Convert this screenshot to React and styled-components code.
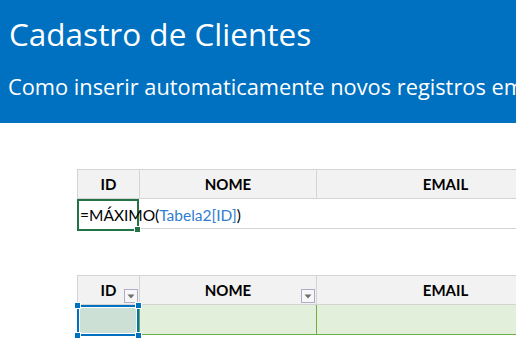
import React from "react";
import styled, { createGlobalStyle } from "styled-components";

const Global = createGlobalStyle`
  html, body { margin: 0; padding: 0; background: #fff; overflow: hidden; }
  body { width: 516px; height: 362px; font-family: Lato, "Open Sans", sans-serif; }
`;

const Page = styled.div`
  width: 516px;
  height: 362px;
  overflow: hidden;
  background: #fff;
`;

const Banner = styled.header`
  background: #0070c0;
  height: 123px;
  box-sizing: border-box;
  padding: 14px 0 0 9px;
  color: #fff;
  white-space: nowrap;
  overflow: hidden;
`;

const Title = styled.h1`
  margin: 0;
  font-family: "Open Sans", sans-serif;
  font-weight: 400;
  font-size: 31.5px;
  line-height: 40px;
  letter-spacing: 0;
`;

const Subtitle = styled.p`
  margin: 19px 0 0 -1px;
  font-family: "Open Sans", sans-serif;
  font-size: 21.8px;
  line-height: 28px;
`;

const Sheet = styled.section`
  padding-left: 77px;
  padding-top: ${(p) => p.$top}px;
`;

const Grid = styled.div`
  display: grid;
  grid-template-columns: 62px 177px 258px;
  grid-auto-rows: 30px;
  width: 497px;
`;

const HeadCell = styled.div`
  position: relative;
  background: #f2f2f2;
  border-top: 1px solid #d4d4d4;
  border-bottom: 1px solid #d4d4d4;
  border-left: 1px solid #d4d4d4;
  box-sizing: border-box;
  display: flex;
  align-items: center;
  justify-content: center;
  font-family: Lato, sans-serif;
  font-weight: 700;
  font-size: 15px;
  color: #000;
`;

const PlainCell = styled.div`
  position: relative;
  box-sizing: border-box;
  border-bottom: 1px solid #d4d4d4;
  background: #fff;
`;

const FormulaCell = styled.div`
  position: relative;
  box-sizing: border-box;
  border: 2px solid #217346;
  margin-bottom: -2px;
  z-index: 2;
  display: flex;
  align-items: center;
  padding-left: 1px;
  font-family: Lato, sans-serif;
  font-size: 15.5px;
  color: #000;
  white-space: nowrap;
  overflow: visible;
`;

const FillHandle = styled.span`
  position: absolute;
  right: -4px;
  bottom: -4px;
  width: 5px;
  height: 5px;
  background: #217346;
  border: 1px solid #fff;
`;

const Ref = styled.span`
  color: #2f7ed0;
`;

const Caret = styled.span`
  display: inline-block;
  width: 1px;
  height: 20px;
  background: #000;
  margin-left: 1px;
`;

const DataCell = styled.div`
  position: relative;
  box-sizing: border-box;
  background: #e2efda;
  border-bottom: 1px solid #70ad47;
  border-left: ${(p) => (p.$sep ? "1px solid #70ad47" : "none")};
`;

const SelectedCell = styled.div`
  position: relative;
  box-sizing: border-box;
  background: #cce0d6;
  border: 2px solid #0070c0;
  outline: 1px solid #fff;
  outline-offset: -3px;
  margin-bottom: -1px;
  z-index: 2;
`;

const Handle = styled.span`
  position: absolute;
  width: 5px;
  height: 5px;
  background: #0070c0;
  border: 1px solid #fff;
  ${(p) => (p.$top ? "top: -5px;" : "bottom: -5px;")}
  ${(p) => (p.$left ? "left: -5px;" : "right: -5px;")}
`;

const DropBtn = styled.span`
  position: absolute;
  right: 1px;
  bottom: 1px;
  width: 14px;
  height: 14px;
  box-sizing: border-box;
  border: 1px solid #b3a9c9;
  background: #f7f7f7;
  display: flex;
  align-items: center;
  justify-content: center;
`;

const Drop = () => (
  <DropBtn>
    <svg width="8" height="5" viewBox="0 0 8 5">
      <path d="M0.5 0.5 H7.5 L4 4.5 Z" fill="#6e6e6e" />
    </svg>
  </DropBtn>
);

export default function App() {
  return (
    <Page>
      <Global />
      <Banner>
        <Title>Cadastro de Clientes</Title>
        <Subtitle>Como inserir automaticamente novos registros em</Subtitle>
      </Banner>

      <Sheet $top={46}>
        <Grid>
          <HeadCell>ID</HeadCell>
          <HeadCell>NOME</HeadCell>
          <HeadCell>EMAIL</HeadCell>
          <FormulaCell>
            =MÁXIMO(<Ref>Tabela2[ID]</Ref>)<Caret />
            <FillHandle />
          </FormulaCell>
          <PlainCell />
          <PlainCell />
        </Grid>
      </Sheet>

      <Sheet $top={46}>
        <Grid>
          <HeadCell>
            ID
            <Drop />
          </HeadCell>
          <HeadCell>
            NOME
            <Drop />
          </HeadCell>
          <HeadCell>EMAIL</HeadCell>
          <SelectedCell>
            <Handle $top $left />
            <Handle $top />
            <Handle $left />
            <Handle />
          </SelectedCell>
          <DataCell $sep />
          <DataCell $sep />
        </Grid>
      </Sheet>
    </Page>
  );
}
